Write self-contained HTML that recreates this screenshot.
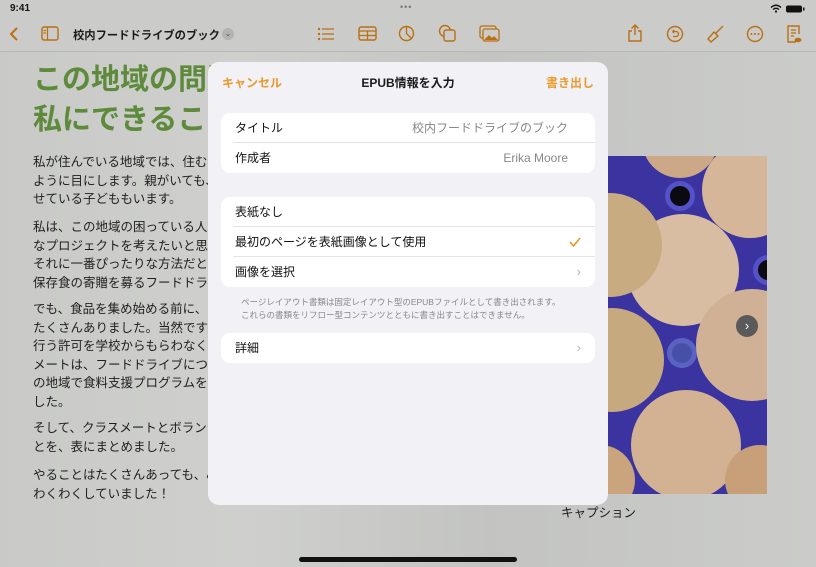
<!DOCTYPE html>
<html><head><meta charset="utf-8"><style>
*{margin:0;padding:0;box-sizing:border-box}
body{width:816px;height:567px;overflow:hidden;position:relative;background:#c8c9c6;font-family:"Liberation Sans","Noto Sans CJK JP",sans-serif;color:#1a1a1a}
.abs{position:absolute}
.bg{position:absolute;inset:0;background:linear-gradient(90deg,#c9cac7 0%,#cfd0cd 30%,#c3c4c1 60%,#cbccc9 100%)}
.top{position:absolute;left:0;top:0;width:816px;height:52px;background:#cbccc9;border-bottom:1px solid #b9bab7}
.body p{position:absolute;left:33px;font-size:12.5px;line-height:18.5px;white-space:nowrap;color:#1e1e1e}
.modal{position:absolute;left:208px;top:62px;width:400px;height:443px;background:#f1f1f6;border-radius:11px}
.grp{position:absolute;left:13px;width:374px;background:#fff;border-radius:9px}
.row{height:30px;line-height:30px;font-size:12px;padding-left:14px;position:relative;color:#111}
.sep{position:absolute;left:12px;right:0;bottom:0;height:1px;background:#e3e3e8}
.chev{position:absolute;right:14px;top:0;color:#b4b4b8;font-size:13px}
svg{position:absolute}
</style></head><body>
<div class="bg"></div>
<div class="top">
 <div class="abs" style="left:10px;top:3px;font-size:10px;font-weight:bold;color:#111">9:41</div>
 <div class="abs" style="left:400px;top:2px;font-size:9px;color:#777;letter-spacing:1px">•••</div>
 <svg style="left:786px;top:5px" width="20" height="8"><rect x="0" y="0.5" width="16" height="7" rx="2" fill="#111"/><rect x="17" y="2.5" width="1.5" height="3" fill="#111"/></svg>
 <svg style="left:770px;top:4px" width="12" height="9"><path d="M1 3.5Q6-1 11 3.5M3 5.5Q6 3 9 5.5" stroke="#111" stroke-width="1.4" fill="none"/><circle cx="6" cy="7.5" r="1.1" fill="#111"/></svg>
 <svg style="left:8px;top:26px" width="12" height="16"><path d="M9 2L3 8L9 14" stroke="#b96f12" stroke-width="2" fill="none"/></svg>
 <svg style="left:41px;top:26px" width="18" height="15"><rect x="1" y="1" width="16" height="13" rx="2" stroke="#b96f12" stroke-width="1.4" fill="none"/><path d="M6.5 1V14M2.5 4.5H5M2.5 7H5" stroke="#b96f12" stroke-width="1.2"/></svg>
 <div class="abs" style="left:73px;top:27px;font-size:11.3px;font-weight:bold;color:#1a1a1a;white-space:nowrap">校内フードドライブのブック</div>
 <div class="abs" style="left:222px;top:28px;width:12px;height:12px;border-radius:6px;background:#b3b4b1;color:#555;font-size:8px;text-align:center;line-height:12px">⌄</div>
 <svg style="left:317px;top:27px" width="18" height="14"><g fill="#b96f12"><circle cx="2" cy="2" r="1.2"/><circle cx="2" cy="7" r="1.2"/><circle cx="2" cy="12" r="1.2"/></g><path d="M5 2H17M5 7H17M5 12H17" stroke="#b96f12" stroke-width="1.3"/></svg>
 <svg style="left:358px;top:26px" width="19" height="15"><rect x="1" y="1" width="17" height="13" rx="2" stroke="#b96f12" stroke-width="1.4" fill="none"/><path d="M1 5H18M1 9.5H18M9.5 5V14" stroke="#b96f12" stroke-width="1.3"/></svg>
 <svg style="left:398px;top:25px" width="17" height="17"><circle cx="8.5" cy="8.5" r="7" stroke="#b96f12" stroke-width="1.4" fill="none"/><path d="M8.5 1.5V8.5L13.5 13.5" stroke="#b96f12" stroke-width="1.3" fill="none"/></svg>
 <svg style="left:438px;top:24px" width="19" height="18"><circle cx="7" cy="7" r="5.5" stroke="#b96f12" stroke-width="1.4" fill="none"/><rect x="6" y="6" width="11" height="11" rx="2" stroke="#b96f12" stroke-width="1.4" fill="#cbccc9"/></svg>
 <svg style="left:479px;top:25px" width="21" height="17"><rect x="1" y="1" width="16" height="12" rx="2" stroke="#b96f12" stroke-width="1.3" fill="none"/><rect x="4" y="4" width="16" height="12" rx="2" stroke="#b96f12" stroke-width="1.3" fill="#cbccc9"/><path d="M5 15L10 10L13 13L15 11L19 15Z" fill="#b96f12"/></svg>
 <svg style="left:627px;top:23px" width="16" height="20"><path d="M8 2V12M4.5 5.5L8 2L11.5 5.5M5 8H2V18H14V8H11" stroke="#b96f12" stroke-width="1.4" fill="none"/></svg>
 <svg style="left:666px;top:25px" width="18" height="18"><circle cx="9" cy="9" r="7.5" stroke="#b96f12" stroke-width="1.4" fill="none"/><path d="M6.5 6.5H10A2.5 2.5 0 0 1 10 11.5H7M6.5 6.5L8 5M6.5 6.5L8 8" stroke="#b96f12" stroke-width="1.3" fill="none"/></svg>
 <svg style="left:706px;top:24px" width="19" height="20"><path d="M17 2L10 9M8 8L12 12L5 18L2 15Z" stroke="#b96f12" stroke-width="1.4" fill="none"/></svg>
 <svg style="left:746px;top:25px" width="18" height="18"><circle cx="9" cy="9" r="7.5" stroke="#b96f12" stroke-width="1.4" fill="none"/><g fill="#b96f12"><circle cx="5.5" cy="9" r="1"/><circle cx="9" cy="9" r="1"/><circle cx="12.5" cy="9" r="1"/></g></svg>
 <svg style="left:786px;top:24px" width="16" height="20"><path d="M10 18H2V2H13V10" stroke="#b96f12" stroke-width="1.4" fill="none"/><path d="M5 6H10M5 9H10M5 12H8" stroke="#b96f12" stroke-width="1.2"/><ellipse cx="12" cy="16" rx="3.5" ry="2.2" fill="#b96f12"/></svg>
</div>
<div class="abs" style="left:33px;top:60px;font-size:29px;line-height:40px;font-weight:bold;color:#5e8a3c;white-space:nowrap">この地域の問題に<br>私にできること</div>
<div class="body">
<p style="top:153px">私が住んでいる地域では、住む家のない人を毎日の<br>ように目にします。親がいても、お腹をすか<br>せている子どももいます。</p>
<p style="top:218px">私は、この地域の困っている人を助けるよう<br>なプロジェクトを考えたいと思いました。<br>それに一番ぴったりな方法だと思ったのが、<br>保存食の寄贈を募るフードドライブです。</p>
<p style="top:300px">でも、食品を集め始める前に、やることが<br>たくさんありました。当然ですが、活動を<br>行う許可を学校からもらわなくては。クラス<br>メートは、フードドライブについて調べ、こ<br>の地域で食料支援プログラムを探してくれま<br>した。</p>
<p style="top:419px">そして、クラスメートとボランティアするこ<br>とを、表にまとめました。</p>
<p style="top:466px">やることはたくさんあっても、みんなで<br>わくわくしていました！</p>
</div>
<svg style="left:560px;top:156px" width="207" height="338" viewBox="560 156 207 338">
 <rect x="560" y="156" width="207" height="338" fill="#3a33a0"/>
 <circle cx="680" cy="196" r="15" fill="#5552c8"/><circle cx="680" cy="196" r="10" fill="#0a0a10"/>
 <circle cx="768" cy="270" r="15" fill="#5552c8"/><circle cx="768" cy="270" r="10" fill="#0a0a10"/>
 <circle cx="682" cy="353" r="15" fill="#5a64c0"/><circle cx="682" cy="353" r="10" fill="#4650a8"/>
 <circle cx="680" cy="140" r="38" fill="#cda887"/>
 <circle cx="750" cy="190" r="48" fill="#d5b698"/>
 <circle cx="683" cy="270" r="56" fill="#d9bda3"/>
 <circle cx="610" cy="245" r="52" fill="#c9ab82"/>
 <circle cx="612" cy="360" r="52" fill="#c6a97e"/>
 <circle cx="752" cy="345" r="56" fill="#d0b195"/>
 <circle cx="686" cy="445" r="55" fill="#d3b193"/>
 <circle cx="760" cy="480" r="35" fill="#c79f78"/>
 <circle cx="600" cy="480" r="35" fill="#c9a47c"/>
</svg>
<div class="abs" style="left:736px;top:315px;width:22px;height:22px;border-radius:11px;background:#5a5a5a;color:#fff;font-size:13px;text-align:center;line-height:21px">›</div>
<div class="abs" style="left:561px;top:502px;font-size:12.5px;color:#1a1a1a">キャプション</div>
<div class="abs" style="left:299px;top:557px;width:218px;height:5px;border-radius:3px;background:#111"></div>
<div class="modal">
 <div class="abs" style="left:14px;top:12px;font-size:12px;color:#e99a2c;font-weight:bold">キャンセル</div>
 <div class="abs" style="left:0;width:400px;text-align:center;top:12px;font-size:12px;font-weight:bold">EPUB情報を入力</div>
 <div class="abs" style="right:14px;top:12px;font-size:12px;color:#e99a2c;font-weight:bold">書き出し</div>
 <div class="grp" style="top:51px">
  <div class="row">タイトル<span class="abs" style="right:27px;color:#888">校内フードドライブのブック</span><div class="sep"></div></div>
  <div class="row">作成者<span class="abs" style="right:27px;color:#888">Erika Moore</span></div>
 </div>
 <div class="grp" style="top:135px">
  <div class="row">表紙なし<div class="sep"></div></div>
  <div class="row">最初のページを表紙画像として使用<svg style="right:14px;top:10px" width="12" height="10"><path d="M1 5L4.5 9L11 1" stroke="#e8962a" stroke-width="1.6" fill="none"/></svg><div class="sep"></div></div>
  <div class="row">画像を選択<span class="chev">›</span></div>
 </div>
 <div class="abs" style="left:33px;top:234px;font-size:8.5px;line-height:13px;color:#888;white-space:nowrap">ページレイアウト書類は固定レイアウト型のEPUBファイルとして書き出されます。<br>これらの書類をリフロー型コンテンツとともに書き出すことはできません。</div>
 <div class="grp" style="top:271px"><div class="row">詳細<span class="chev">›</span></div></div>
</div>
</body></html>
